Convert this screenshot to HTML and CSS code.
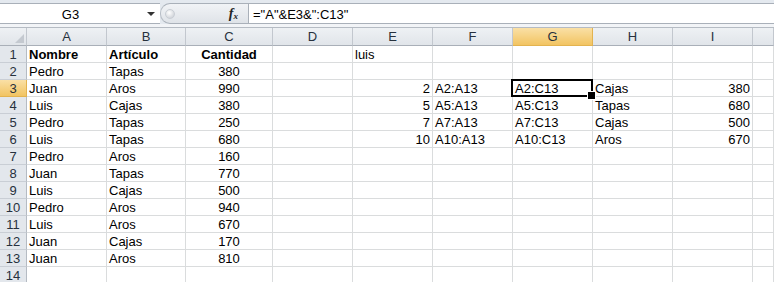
FILE: index.html
```html
<!DOCTYPE html>
<html lang="es">
<head>
    <meta charset="UTF-8">
    <title>Hoja de cálculo</title>
    <link rel="stylesheet" href="styles.css">
</head>
<body>
    <!-- barra de formulas -->
    <div class="formula-bar">
        <div class="name-box">
            <span class="name">G3</span>
            <span class="arrow"></span>
        </div>
        <div class="fx-area">
            <span class="knob"></span>
            <span class="fx">f<sub>x</sub></span>
        </div>
        <div class="formula">="A"&amp;E3&amp;":C13"</div>
    </div>

    <!-- hoja -->
    <div class="sheet">
        <div class="row head">
            <div class="corner"><span class="tri"></span></div>
            <div>A</div><div>B</div><div>C</div><div>D</div><div>E</div>
            <div>F</div><div class="sel">G</div><div>H</div><div>I</div><div></div>
        </div>
        <div class="row">
            <div class="num">1</div>
            <div class="b">Nombre</div><div class="b">Artículo</div><div class="b c">Cantidad</div>
            <div></div><div>luis</div><div></div><div></div><div></div><div></div><div></div>
        </div>
        <div class="row">
            <div class="num">2</div>
            <div>Pedro</div><div>Tapas</div><div class="c">380</div>
            <div></div><div></div><div></div><div></div><div></div><div></div><div></div>
        </div>
        <div class="row">
            <div class="num sel">3</div>
            <div>Juan</div><div>Aros</div><div class="c">990</div>
            <div></div><div class="r">2</div><div>A2:A13</div><div class="active">A2:C13</div><div>Cajas</div><div class="r">380</div><div></div>
        </div>
        <div class="row">
            <div class="num">4</div>
            <div>Luis</div><div>Cajas</div><div class="c">380</div>
            <div></div><div class="r">5</div><div>A5:A13</div><div>A5:C13</div><div>Tapas</div><div class="r">680</div><div></div>
        </div>
        <div class="row">
            <div class="num">5</div>
            <div>Pedro</div><div>Tapas</div><div class="c">250</div>
            <div></div><div class="r">7</div><div>A7:A13</div><div>A7:C13</div><div>Cajas</div><div class="r">500</div><div></div>
        </div>
        <div class="row">
            <div class="num">6</div>
            <div>Luis</div><div>Tapas</div><div class="c">680</div>
            <div></div><div class="r">10</div><div>A10:A13</div><div>A10:C13</div><div>Aros</div><div class="r">670</div><div></div>
        </div>
        <div class="row">
            <div class="num">7</div>
            <div>Pedro</div><div>Aros</div><div class="c">160</div>
            <div></div><div></div><div></div><div></div><div></div><div></div><div></div>
        </div>
        <div class="row">
            <div class="num">8</div>
            <div>Juan</div><div>Tapas</div><div class="c">770</div>
            <div></div><div></div><div></div><div></div><div></div><div></div><div></div>
        </div>
        <div class="row">
            <div class="num">9</div>
            <div>Luis</div><div>Cajas</div><div class="c">500</div>
            <div></div><div></div><div></div><div></div><div></div><div></div><div></div>
        </div>
        <div class="row">
            <div class="num">10</div>
            <div>Pedro</div><div>Aros</div><div class="c">940</div>
            <div></div><div></div><div></div><div></div><div></div><div></div><div></div>
        </div>
        <div class="row">
            <div class="num">11</div>
            <div>Luis</div><div>Aros</div><div class="c">670</div>
            <div></div><div></div><div></div><div></div><div></div><div></div><div></div>
        </div>
        <div class="row">
            <div class="num">12</div>
            <div>Juan</div><div>Cajas</div><div class="c">170</div>
            <div></div><div></div><div></div><div></div><div></div><div></div><div></div>
        </div>
        <div class="row">
            <div class="num">13</div>
            <div>Juan</div><div>Aros</div><div class="c">810</div>
            <div></div><div></div><div></div><div></div><div></div><div></div><div></div>
        </div>
        <div class="row">
            <div class="num">14</div>
            <div></div><div></div><div></div>
            <div></div><div></div><div></div><div></div><div></div><div></div><div></div>
        </div>
    </div>
</body>
</html>
```

FILE: styles.css
```css
* {
    box-sizing: border-box;
}

body {
    margin: 0;
    font-family: "Liberation Sans", Arial, sans-serif;
    font-size: 13px;
    color: #000;
    background: #fff;
    overflow: hidden;
}

/* barra de formulas */

.formula-bar {
    display: flex;
    height: 27px;
    padding-top: 3px;
    background: #e4e9ef;
    border-bottom: 3px solid #f2f4f7;
}

.formula-bar > div {
    height: 21px;
    border-top: 1px solid #a9b0b9;
    border-bottom: 1px solid #a9b0b9;
}

.name-box {
    display: flex;
    align-items: center;
    width: 160px;
    background: #fff;
}

.name {
    flex: 1;
    text-align: center;
    padding-right: 6px;
    padding-top: 1px;
}

.arrow {
    width: 0;
    height: 0;
    margin: 1px 5px 0 0;
    border-style: solid;
    border-width: 4px 4px 0 4px;
    border-color: #333 transparent transparent transparent;
}

.fx-area {
    display: flex;
    align-items: center;
    justify-content: space-between;
    width: 89px;
    padding: 0 10px 0 4px;
    background: linear-gradient(#f1f3f6, #dfe3e8);
    border-left: 1px solid #b7bdc5;
    border-right: 1px solid #a9b0b9;
    border-radius: 10px 0 0 10px;
}

.knob {
    width: 10px;
    height: 10px;
    border-radius: 50%;
    background: radial-gradient(circle at 40% 35%, #fff, #c3c8cf);
    border: 1px solid #c9ced5;
}

.fx {
    font-family: "Liberation Serif", serif;
    font-style: italic;
    font-weight: bold;
    font-size: 14px;
    color: #222;
}

.fx sub {
    font-size: 9px;
    vertical-align: -1px;
}

.formula {
    flex: 1;
    background: #fff;
    padding: 1px 0 0 4px;
    line-height: 19px;
}

/* hoja */

.sheet {
    border-top: 1px solid #b5bbc3;
}

.row {
    display: grid;
    grid-template-columns: 27px 80px 79px 87px 80px 80px 80px 80px 80px 80px 1fr;
    height: 17px;
}

.row > div {
    height: 17px;
    padding: 1px 2px 0 2px;
    line-height: 16px;
    white-space: nowrap;
    border-right: 1px solid #dadcdd;
    border-bottom: 1px solid #dadcdd;
}

.row.head {
    height: 18px;
    background: linear-gradient(#eef1f4, #e0e4e9);
}

.row.head > div {
    height: 18px;
    text-align: center;
    color: #27313d;
    border-right-color: #c2c7ce;
    border-bottom-color: #a9afb8;
}

.corner {
    position: relative;
}

.tri {
    position: absolute;
    right: 2px;
    bottom: 2px;
    width: 0;
    height: 0;
    border-left: 9px solid transparent;
    border-bottom: 9px solid #c4c9d0;
}

.row > .num {
    text-align: center;
    color: #27313d;
    background: #e3e7ec;
    border-right-color: #b5bbc3;
    border-bottom-color: #c9ced5;
}

.row.head > .sel,
.row > .num.sel {
    background: linear-gradient(#fae0a6, #f2c462);
    border-right-color: #e3b34f;
    border-bottom-color: #e3b34f;
}

.b {
    font-weight: bold;
}

.c {
    text-align: center;
}

.r {
    text-align: right;
}

.active {
    position: relative;
}

.active::before {
    content: "";
    position: absolute;
    top: -1px;
    left: -2px;
    right: -1px;
    bottom: -1px;
    border: 2px solid #000;
}

.active::after {
    content: "";
    position: absolute;
    right: -4px;
    bottom: -4px;
    width: 7px;
    height: 7px;
    background: #000;
    border: 1px solid #fff;
}
```
